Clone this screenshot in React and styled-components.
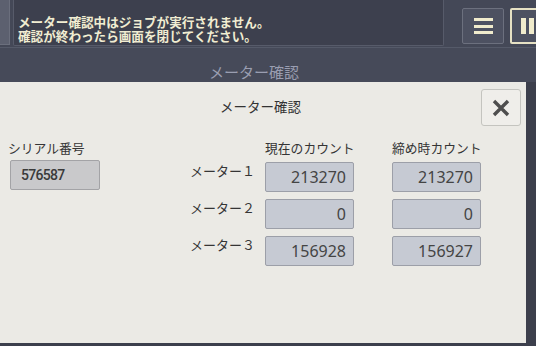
import styled, { createGlobalStyle } from "styled-components";

const GlobalStyle = createGlobalStyle`
    html, body {
        margin: 0;
        padding: 0;
        background: #3c3f4c;
    }
    * {
        box-sizing: border-box;
    }
`;

const meters = [
    { name: "メーター１", current: "213270", closing: "213270" },
    { name: "メーター２", current: "0", closing: "0" },
    { name: "メーター３", current: "156928", closing: "156927" },
];

export default function App() {
    return (
        <>
            <GlobalStyle />
            <Screen>
                <TopBar>
                    <Stub />
                    <MessageBox>
                        <Line>メーター確認中はジョブが実行されません。</Line>
                        <Line>確認が終わったら画面を閉じてください。</Line>
                    </MessageBox>
                    <MenuButton aria-label="メニュー">
                        <span />
                        <span />
                        <span />
                    </MenuButton>
                    <PauseButton aria-label="一時停止">
                        <span />
                        <span />
                    </PauseButton>
                </TopBar>

                <Band>メーター確認</Band>

                <Dialog>
                    <DialogHeader>
                        <DialogTitle>メーター確認</DialogTitle>
                        <CloseButton aria-label="閉じる">
                            <svg width="20" height="20" viewBox="0 0 20 20">
                                <path d="M3 3 L17 17 M17 3 L3 17" stroke="#4e4e4e" strokeWidth="3.4" strokeLinecap="butt" />
                            </svg>
                        </CloseButton>
                    </DialogHeader>

                    <DialogBody>
                        <SerialColumn>
                            <Label>シリアル番号</Label>
                            <SerialBox>576587</SerialBox>
                        </SerialColumn>

                        <MeterTable>
                            <span />
                            <Label>現在のカウント</Label>
                            <Label>締め時カウント</Label>
                            {meters.map((m) => (
                                <Row key={m.name}>
                                    <MeterName>{m.name}</MeterName>
                                    <CountBox>{m.current}</CountBox>
                                    <CountBox>{m.closing}</CountBox>
                                </Row>
                            ))}
                        </MeterTable>
                    </DialogBody>
                </Dialog>
            </Screen>
        </>
    );
}

const Screen = styled.div`
    width: 536px;
    height: 346px;
    overflow: hidden;
    background: #3c3f4c;
    display: flex;
    flex-direction: column;
    font-family: "Noto Sans CJK JP", "Noto Sans", sans-serif;
`;

const TopBar = styled.div`
    display: flex;
    align-items: flex-start;
    height: 48px;
    overflow: hidden;
    background: #444857;
    border-bottom: 1px solid #555a69;

    & > * {
        flex-shrink: 0;
    }
`;

const Stub = styled.div`
    width: 10px;
    height: 45px;
    background: #5c606f;
    border-right: 1px solid #6b6f7d;
    border-bottom: 1px solid #6b6f7d;
`;

const MessageBox = styled.div`
    margin-left: 3px;
    width: 431px;
    height: 46px;
    background: #3d404e;
    border: 1px solid #575b6a;
    border-top: none;
    border-radius: 0 0 2px 2px;
    padding: 15px 0 0 4px;
    display: flex;
    flex-direction: column;
    color: #f1edd2;
    font-size: 12.6px;
    font-weight: 700;
    white-space: nowrap;
`;

const Line = styled.span`
    display: block;
    height: 14px;
    line-height: 14px;
`;

const MenuButton = styled.div`
    margin: 8px 0 0 18px;
    width: 42px;
    height: 36px;
    background: #4d5161;
    border: 1px solid #6c707e;
    border-radius: 2px;
    display: flex;
    flex-direction: column;
    align-items: center;
    justify-content: center;
    gap: 3.5px;

    span {
        display: block;
        width: 19px;
        height: 3px;
        background: #f0ebcc;
    }
`;

const PauseButton = styled.div`
    margin: 8px 0 0 6px;
    width: 40px;
    height: 36px;
    background: #4d5161;
    border: 2px solid #e6e1c4;
    border-radius: 2px;
    display: flex;
    align-items: center;
    padding-left: 9px;
    gap: 3px;

    span {
        display: block;
        width: 5px;
        height: 16px;
        background: #f0ebcc;
    }
`;

const Band = styled.div`
    height: 34px;
    overflow: hidden;
    padding: 14px 28px 0 0;
    text-align: center;
    color: #9a9eb1;
    font-size: 15px;
    line-height: 19px;
    background: #464a59;
`;

const Dialog = styled.div`
    width: 526px;
    height: 261px;
    background: #ebeae5;
    display: flex;
    flex-direction: column;
    padding: 7px 5px 0 0;
`;

const DialogHeader = styled.div`
    display: grid;
    grid-template-columns: 1fr 40px;
    height: 37px;
`;

const DialogTitle = styled.div`
    align-self: center;
    text-align: center;
    padding: 0 0 4px 40px;
    font-size: 13.5px;
    color: #333;
`;

const CloseButton = styled.div`
    width: 40px;
    height: 37px;
    background: #efeeea;
    border: 1px solid #c4c4bf;
    border-radius: 3px;
    display: flex;
    align-items: center;
    justify-content: center;
`;

const DialogBody = styled.div`
    display: flex;
    padding: 15px 0 0 8px;
`;

const SerialColumn = styled.div`
    width: 182px;
    display: flex;
    flex-direction: column;
    gap: 5px;
`;

const Label = styled.div`
    font-size: 12.8px;
    line-height: 14px;
    color: #353535;
    white-space: nowrap;
`;

const SerialBox = styled.div`
    margin-left: 2px;
    width: 90px;
    height: 30px;
    background: #c9c9cb;
    border: 1px solid #a3a3a6;
    border-radius: 2px;
    display: flex;
    align-items: center;
    padding-left: 10px;
    font-family: Roboto, "Liberation Sans", sans-serif;
    font-weight: 500;
    font-size: 14px;
    letter-spacing: -0.7px;
    color: #3a3a3a;
`;

const MeterTable = styled.div`
    display: grid;
    grid-template-columns: 75px 127px 90px;
    grid-auto-rows: auto;
    row-gap: 7px;
`;

const Row = styled.div`
    display: contents;
`;

const MeterName = styled.div`
    padding-top: 2px;
    font-size: 13px;
    line-height: 14px;
    color: #353535;
    white-space: nowrap;
`;

const CountBox = styled.div`
    width: 89px;
    height: 30px;
    background: #c6cad3;
    border: 1px solid #9c9fa8;
    border-radius: 2px;
    display: flex;
    align-items: center;
    justify-content: flex-end;
    padding-right: 7px;
    font-family: "Noto Sans", "Open Sans", sans-serif;
    font-size: 16px;
    color: #444;
`;
